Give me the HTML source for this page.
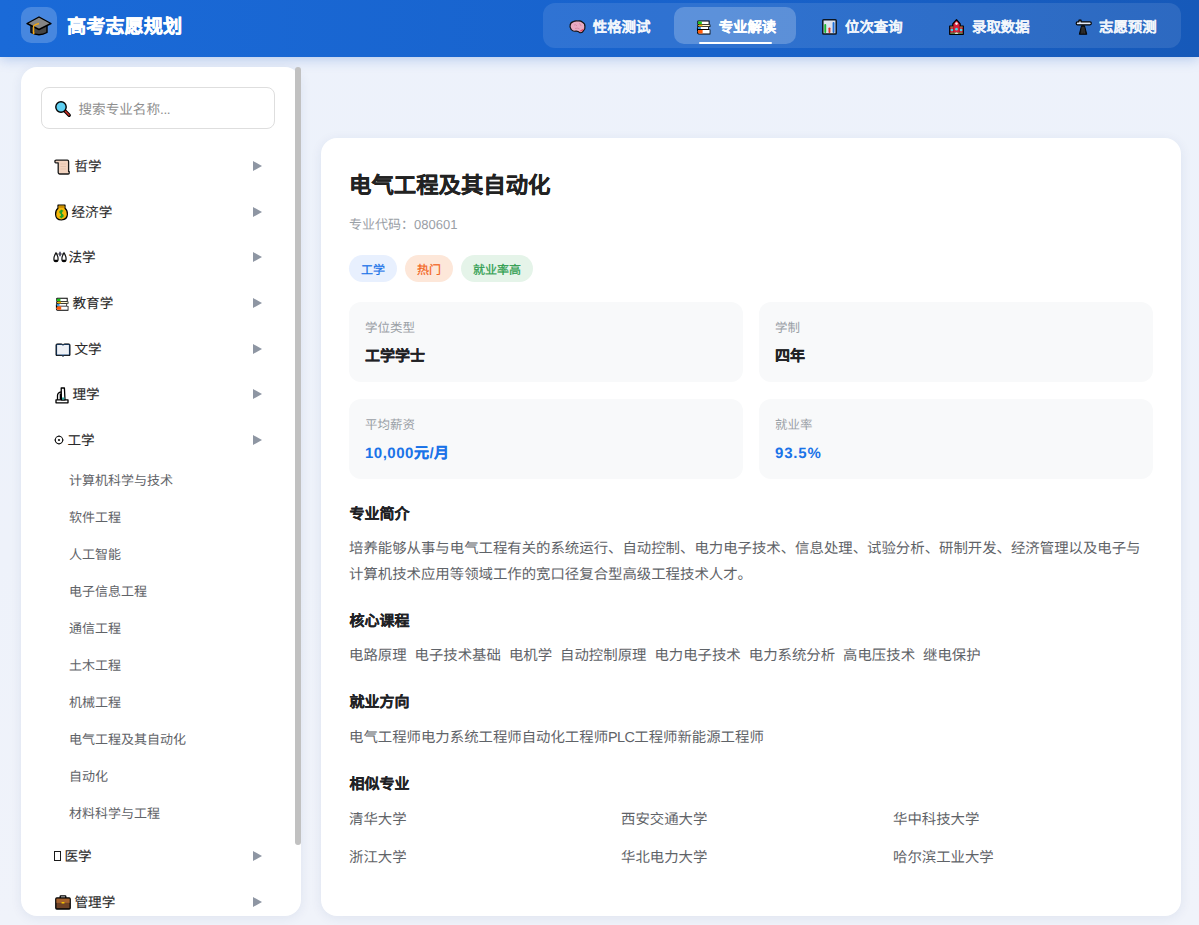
<!DOCTYPE html>
<html lang="zh-CN">
<head>
<meta charset="utf-8">
<title>高考志愿规划</title>
<style>
*{margin:0;padding:0;box-sizing:border-box}
html,body{width:1199px;height:925px;overflow:hidden}
body{font-family:"Liberation Sans",sans-serif;text-rendering:geometricPrecision;background:linear-gradient(180deg,#edf2fb 0%,#eef2fa 60%,#f0f3fa 100%);position:relative;color:#333}
.ic{position:absolute;overflow:visible}
.abs{position:absolute;white-space:nowrap;line-height:1}
#hdr{position:absolute;left:0;top:0;width:1199px;height:57px;background:linear-gradient(90deg,#1a6ad8 0%,#1862cb 60%,#1659b9 100%);box-shadow:0 2px 12px rgba(26,90,200,.28)}
#logo{position:absolute;left:21px;top:7px;width:36px;height:36px;border-radius:10px;background:rgba(255,255,255,.2)}
#brand{left:67px;top:18px;font-size:19.2px;font-weight:700;color:#fff;-webkit-text-stroke:.35px #fff}
#nav{position:absolute;left:543px;top:3px;width:638px;height:45px;border-radius:12px;background:rgba(255,255,255,.1)}
#act{position:absolute;left:674px;top:7px;width:122px;height:37px;border-radius:10px;background:rgba(255,255,255,.22)}
#uline{position:absolute;left:699px;top:42px;width:73px;height:2px;background:#fff;border-radius:1px}
.nt{font-size:14.4px;font-weight:700;color:rgba(255,255,255,.82);top:21px;-webkit-text-stroke:.2px rgba(255,255,255,.82)}
.nt.on{-webkit-text-stroke:.25px #fff}
.nt.on{color:#fff}
#side{position:absolute;left:21px;top:67px;width:280px;height:849px;border-radius:16px;background:#fff;box-shadow:0 2px 12px rgba(20,50,110,.08)}
#thumb{position:absolute;left:295px;top:67px;width:6px;height:778px;border-radius:3px;background:#c1c1c1}
#search{position:absolute;left:41px;top:87px;width:234px;height:42px;border:1px solid #dedede;border-radius:8px;background:#fff}
#ph{left:78.5px;top:103px;font-size:13.6px;color:#8f8f8f}
.cat{font-size:13.6px;color:#2a2a2a;-webkit-text-stroke:.1px #2a2a2a}
.arr{position:absolute;left:253px;width:0;height:0;border-top:5.2px solid transparent;border-bottom:5.2px solid transparent;border-left:9.4px solid #8e96a3}
.sub{font-size:13px;color:#5f6368}
#main{position:absolute;left:321px;top:138px;width:860px;height:778px;border-radius:16px;background:#fff;box-shadow:0 2px 12px rgba(20,50,110,.08)}
#title{left:349px;top:174.5px;-webkit-text-stroke:.25px #222;font-size:22.4px;font-weight:700;color:#222}
#code{left:349px;top:218px;font-size:13px;color:#9aa0a6}
.tag{position:absolute;top:255px;height:27px;border-radius:14px;font-size:12px;line-height:30px;text-align:center;-webkit-text-stroke:.25px currentColor}
.box{position:absolute;width:394px;height:80px;border-radius:12px;background:#f8f9fa}
.lbl{font-size:12.5px;color:#9aa0a6}
.val{font-size:15px;font-weight:700;color:#202124;-webkit-text-stroke:.2px #202124}
.val.blue{color:#1a73e8;-webkit-text-stroke:.15px #1a73e8}
.lat{-webkit-text-stroke:0}
.sec{font-size:15px;font-weight:700;color:#202124;-webkit-text-stroke:.15px #202124}
.txt{font-size:14.4px;color:#5f6368}
</style>
</head>
<body>
<div id="hdr"></div>
<div id="logo"></div>
<div class="abs" id="brand">高考志愿规划</div>
<div id="nav"></div>
<div id="act"></div>
<div id="uline"></div>
<div class="abs nt" style="left:592.8px">性格测试</div>
<div class="abs nt on" style="left:718.7px">专业解读</div>
<div class="abs nt" style="left:845px">位次查询</div>
<div class="abs nt" style="left:972px">录取数据</div>
<div class="abs nt" style="left:1099px">志愿预测</div>

<div id="side"></div>
<div id="thumb"></div>
<div id="search"></div>
<div class="abs" id="ph">搜索专业名称<span style="letter-spacing:-.4px">...</span></div>

<div class="abs cat" style="left:74.5px;top:160.3px">哲学</div><div class="arr" style="top:161px"></div>
<div class="abs cat" style="left:71.5px;top:206.3px">经济学</div><div class="arr" style="top:207px"></div>
<div class="abs cat" style="left:68.5px;top:251.3px">法学</div><div class="arr" style="top:252px"></div>
<div class="abs cat" style="left:72.5px;top:297.3px">教育学</div><div class="arr" style="top:298px"></div>
<div class="abs cat" style="left:74.5px;top:343.3px">文学</div><div class="arr" style="top:344px"></div>
<div class="abs cat" style="left:72.5px;top:388.3px">理学</div><div class="arr" style="top:389px"></div>
<div class="abs cat" style="left:67.5px;top:434.3px">工学</div><div class="arr" style="top:435px"></div>
<div class="abs sub" style="left:69px;top:474.0px">计算机科学与技术</div>
<div class="abs sub" style="left:69px;top:511.0px">软件工程</div>
<div class="abs sub" style="left:69px;top:548.0px">人工智能</div>
<div class="abs sub" style="left:69px;top:585.0px">电子信息工程</div>
<div class="abs sub" style="left:69px;top:622.0px">通信工程</div>
<div class="abs sub" style="left:69px;top:659.0px">土木工程</div>
<div class="abs sub" style="left:69px;top:696.0px">机械工程</div>
<div class="abs sub" style="left:69px;top:733.0px">电气工程及其自动化</div>
<div class="abs sub" style="left:69px;top:770.0px">自动化</div>
<div class="abs sub" style="left:69px;top:807.0px">材料科学与工程</div>
<div class="abs cat" style="left:64.5px;top:850.3px">医学</div><div class="arr" style="top:851px"></div>
<div class="abs cat" style="left:74.5px;top:896.3px">管理学</div><div class="arr" style="top:897px"></div>

<div id="main"></div>
<div class="abs" id="title">电气工程及其自动化</div>
<div class="abs" id="code">专业代码：080601</div>
<div class="tag" style="left:349px;width:48px;background:#e8f0fe;color:#1a73e8">工学</div>
<div class="tag" style="left:405px;width:48px;background:#fde7d9;color:#f26522">热门</div>
<div class="tag" style="left:461px;width:72px;background:#e5f4e9;color:#2e9d4e">就业率高</div>

<div class="box" style="left:349px;top:302.3px;width:393.5px"></div>
<div class="box" style="left:759px;top:302.3px"></div>
<div class="box" style="left:349px;top:398.6px;width:393.5px"></div>
<div class="box" style="left:759px;top:398.6px"></div>
<div class="abs lbl" style="left:365px;top:322.0px">学位类型</div>
<div class="abs val" style="left:365px;top:349.0px">工学学士</div>
<div class="abs lbl" style="left:775px;top:322.0px">学制</div>
<div class="abs val" style="left:775px;top:349.0px">四年</div>
<div class="abs lbl" style="left:365px;top:419.0px">平均薪资</div>
<div class="abs val blue" style="left:365px;top:446.0px"><span class="lat" style="letter-spacing:.5px">10,000</span>元<span class="lat" style="margin:0 .5px">/</span>月</div>
<div class="abs lbl" style="left:775px;top:419.0px">就业率</div>
<div class="abs val blue" style="left:775px;top:446.0px"><span class="lat" style="letter-spacing:.8px">93.5%</span></div>

<div class="abs sec" style="left:349.5px;top:507.0px">专业简介</div>
<div class="abs txt" style="left:349px;top:542.0px">培养能够从事与电气工程有关的系统运行、自动控制、电力电子技术、信息处理、试验分析、研制开发、经济管理以及电子与</div>
<div class="abs txt" style="left:349px;top:568.0px">计算机技术应用等领域工作的宽口径复合型高级工程技术人才。</div>
<div class="abs sec" style="left:349.5px;top:614.0px">核心课程</div>
<div class="abs txt" style="left:349px;top:649.0px">电路原理&nbsp; 电子技术基础&nbsp; 电机学&nbsp; 自动控制原理&nbsp; 电力电子技术&nbsp; 电力系统分析&nbsp; 高电压技术&nbsp; 继电保护</div>
<div class="abs sec" style="left:349.5px;top:695.0px">就业方向</div>
<div class="abs txt" style="left:349px;top:731.0px">电气工程师电力系统工程师自动化工程师<span style="letter-spacing:-.6px">PLC</span>工程师新能源工程师</div>
<div class="abs sec" style="left:349.5px;top:777.0px">相似专业</div>
<div class="abs txt" style="left:349px;top:813.0px">清华大学</div>
<div class="abs txt" style="left:621px;top:813.0px">西安交通大学</div>
<div class="abs txt" style="left:893px;top:813.0px">华中科技大学</div>
<div class="abs txt" style="left:349px;top:851.0px">浙江大学</div>
<div class="abs txt" style="left:621px;top:851.0px">华北电力大学</div>
<div class="abs txt" style="left:893px;top:851.0px">哈尔滨工业大学</div>

<!-- icons -->
<svg class="ic" style="left:26px;top:15.5px" width="26" height="21" viewBox="0 0 26 21">
 <path d="M5 9.5 V16.5 Q13 21 21 16.5 V9.5 Z" fill="#454545" stroke="#000" stroke-width="1.4" stroke-linejoin="round"/>
 <path d="M1 7.5 L13 1 L25 7.5 L13 13.5 Z" fill="#858585" stroke="#000" stroke-width="1.4" stroke-linejoin="round"/>
 <path d="M13 7.5 Q9 8.5 7.6 10 V17" fill="none" stroke="#f3a712" stroke-width="1.3"/>
 <circle cx="7.6" cy="17.3" r="1" fill="#f3a712"/>
</svg>
<svg class="ic" style="left:54px;top:100px" width="17" height="17" viewBox="0 0 17 17">
 <path d="M10.5 10.5 L15.2 15.2" stroke="#000" stroke-width="3.4" stroke-linecap="round"/>
 <path d="M10.8 10.8 L15 15" stroke="#d22f27" stroke-width="1.5" stroke-linecap="round"/>
 <circle cx="7" cy="7" r="5.2" fill="#5fd0f2" stroke="#000" stroke-width="1.4"/>
</svg>
<svg class="ic" style="left:568.5px;top:19.5px" width="17" height="14" viewBox="0 0 17 14">
 <path d="M2.2 9.5 Q0.3 7.5 1.2 5 Q1.6 2.2 4.5 1.6 Q6.5 0.4 9 1 Q11.5 0.6 13.6 2.2 Q16.2 3.6 15.9 6.6 Q16.4 9.5 14.3 11 Q13.2 13.3 10.8 12.6 Q9 11 6.8 11.2 Q3.8 11.6 2.2 9.5 Z" fill="#e8aac2" stroke="#111" stroke-width="1.2" stroke-linejoin="round"/>
 <path d="M10.2 11.2 Q12.5 12.2 14 10.5 L14.8 8.5 Q12.5 9.8 10.2 11.2Z" fill="#e0465e"/>
 <path d="M5 5 Q7 4 8 6 M10 3.5 Q12 4 12 6 M6 8.5 Q8.5 7.5 10.5 9" stroke="#cf7e9a" stroke-width="0.7" fill="none"/>
</svg>
<svg class="ic" style="left:696px;top:20px" width="15" height="15" viewBox="0 0 15 15">
 <path d="M1.2 2 Q1.2 0.6 2.6 0.6 H13.6 V4.6 H14.4 V7 H13 V9.4 H14.4 V14.4 H2.6 Q1 14.4 1 12.6 V10.4 Q0.6 8 1.4 7 Q1 5.6 1.6 4.6 Q1.2 3.6 1.2 2 Z" fill="#000"/>
 <path d="M2.8 1.5 H12.6 V3.9 H2.8 Q1.9 3.9 1.9 2.7 Q1.9 1.5 2.8 1.5Z" fill="#fff"/><path d="M2.8 1.5 H5.8 V3.9 H2.8 Q1.9 3.9 1.9 2.7 Q1.9 1.5 2.8 1.5Z" fill="#19c419"/>
 <path d="M3 4.7 H13.6 V6.3 H3 Q2.3 6.3 2.3 5.5 Q2.3 4.7 3 4.7Z" fill="#fff7d0"/><path d="M3 4.7 H6.4 V6.3 H3 Q2.3 6.3 2.3 5.5 Q2.3 4.7 3 4.7Z" fill="#f5b400"/>
 <path d="M2.6 7.1 H12.2 V9.1 H2.6 Q1.8 9.1 1.8 8.1 Q1.8 7.1 2.6 7.1Z" fill="#fff"/><path d="M2.6 7.1 H4.8 V9.1 H2.6 Q1.8 9.1 1.8 8.1 Q1.8 7.1 2.6 7.1Z" fill="#2b8de8"/>
 <path d="M3 9.9 H13.6 V13.5 H3 Q1.8 13.5 1.8 11.7 Q1.8 9.9 3 9.9Z" fill="#fff"/><path d="M3 9.9 H6.6 V13.5 H3 Q1.8 13.5 1.8 11.7 Q1.8 9.9 3 9.9Z" fill="#ff5a0a"/>
</svg>
<svg class="ic" style="left:822px;top:19px" width="15" height="16" viewBox="0 0 15 16">
 <rect x="0.8" y="0.8" width="13.4" height="14.2" rx="0.8" fill="#dde3ee" stroke="#0b1522" stroke-width="1.5"/>
 <rect x="2.3" y="5" width="1.9" height="9" rx="0.9" fill="#16b82e"/>
 <rect x="6.5" y="8.4" width="1.9" height="5.6" rx="0.9" fill="#e0352b"/>
 <rect x="10.6" y="3" width="1.9" height="11" rx="0.9" fill="#1e6fd9"/>
</svg>
<svg class="ic" style="left:949px;top:19px" width="15" height="16" viewBox="0 0 15 16">
 <path d="M7.5 0.6 L11.2 4.8 V7 H14.3 V15.3 H0.7 V7 H3.8 V4.8 Z" fill="#d8203a" stroke="#000" stroke-width="1.2" stroke-linejoin="round"/>
 <circle cx="7.5" cy="4.6" r="1.3" fill="#f2f2f2"/>
 <path d="M4.6 7.2 V14.6 M10.4 7.2 V14.6" stroke="#8a0f1f" stroke-width="0.6"/>
 <rect x="1.3" y="7.6" width="2.9" height="0.9" fill="#7a9a40"/><rect x="10.8" y="7.6" width="2.9" height="0.9" fill="#7a9a40"/>
 <circle cx="2.9" cy="11" r="1.35" fill="#3fd6ea"/><circle cx="7.5" cy="10.2" r="1.35" fill="#3fd6ea"/><circle cx="12.1" cy="11" r="1.35" fill="#3fd6ea"/>
 <rect x="1.3" y="13.6" width="12.4" height="1.1" fill="#3aa655"/>
 <path d="M5.6 14.8 Q7.5 12.4 9.4 14.8Z" fill="#fff"/>
</svg>
<svg class="ic" style="left:1075px;top:19px" width="17" height="16" viewBox="0 0 17 16">
 <path d="M6.5 6.8 L9.5 6.8 L11.8 15.3 L4.3 15.3 Z" fill="#1a1a1a" stroke="#000" stroke-width="0.9"/>
 <path d="M7.2 8 L7 14.5 M8.8 8 L9.2 14.5" stroke="#555" stroke-width="0.6"/>
 <path d="M1.2 4.2 Q1.2 2.8 2.6 2.8 H4 V1.2 H6 V2.8 H15 Q16.3 2.8 16.3 4.3 Q16.3 5.8 15 5.8 H2.6 Q1.2 5.8 1.2 4.2 Z" fill="#e4ecfa" stroke="#000" stroke-width="1.2" stroke-linejoin="round"/>
</svg>
<svg class="ic" style="left:54px;top:157.5px" width="16" height="17" viewBox="0 0 16 17">
 <path d="M4.2 2.2 H13.4 Q14.6 2.2 14.6 3.4 V13.4 H15.2 V15.2 Q15.2 16 14.2 16 H5.6 Q4.2 16 4.2 14.6 V4.8 H1.8 Q0.9 4.8 0.9 3.5 Q0.9 2.2 2.2 2.2 Z" fill="#f2d3bf" stroke="#1a1a1a" stroke-width="1.3" stroke-linejoin="round"/>
 <path d="M6.5 6 H12 M6.5 8.5 H12 M6.5 11 H12" stroke="#d8b9a4" stroke-width="0.6"/>
</svg>
<svg class="ic" style="left:54.5px;top:203.5px" width="13" height="17" viewBox="0 0 13 17">
 <path d="M3 1 H10 V4.2 Q12.6 6.2 12.4 10.4 Q12.2 15.6 6.5 16 Q0.8 15.6 0.6 10.4 Q0.4 6.2 3 4.2 Z" fill="#f5b70a" stroke="#000" stroke-width="1.2" stroke-linejoin="round"/>
 <rect x="3.6" y="2" width="5.8" height="1.8" fill="#c98a00"/>
 <path d="M8.2 7.2 Q6.6 6.2 5.2 7.2 Q4.3 8.6 6.4 9.8 Q8.6 11 7.8 12.6 Q6.4 13.8 4.8 12.6 M6.5 5.8 V14.2" fill="none" stroke="#1ca32a" stroke-width="1.3"/>
</svg>
<svg class="ic" style="left:53px;top:251px" width="14" height="12" viewBox="0 0 14 12">
 <path d="M2.5 3 H11.5" stroke="#333" stroke-width="0.8"/>
 <path d="M7 0.8 V5.2" stroke="#1a1a3a" stroke-width="1.3"/>
 <path d="M3 1.8 Q0.9 5 0.9 8.2 Q0.9 10.6 3 10.6 Q5.1 10.6 5.1 8.2 Q5.1 5 3 1.8 Z" fill="#fff" stroke="#111" stroke-width="1.2"/>
 <path d="M11 1.8 Q8.9 5 8.9 8.2 Q8.9 10.6 11 10.6 Q13.1 10.6 13.1 8.2 Q13.1 5 11 1.8 Z" fill="#fff" stroke="#111" stroke-width="1.2"/>
 <path d="M1.3 9.6 H4.7 M9.3 9.6 H12.7" stroke="#000" stroke-width="1.6"/>
</svg>
<svg class="ic" style="left:55px;top:296.5px" width="14" height="14.5" viewBox="0 0 15 15">
 <path d="M1.2 2 Q1.2 0.6 2.6 0.6 H13.6 V4.6 H14.4 V7 H13 V9.4 H14.4 V14.4 H2.6 Q1 14.4 1 12.6 V10.4 Q0.6 8 1.4 7 Q1 5.6 1.6 4.6 Q1.2 3.6 1.2 2 Z" fill="#000"/>
 <path d="M2.8 1.5 H12.6 V3.9 H2.8 Q1.9 3.9 1.9 2.7 Q1.9 1.5 2.8 1.5Z" fill="#fff"/><path d="M2.8 1.5 H5.8 V3.9 H2.8 Q1.9 3.9 1.9 2.7 Q1.9 1.5 2.8 1.5Z" fill="#19c419"/>
 <path d="M3 4.7 H13.6 V6.3 H3 Q2.3 6.3 2.3 5.5 Q2.3 4.7 3 4.7Z" fill="#fff7d0"/><path d="M3 4.7 H6.4 V6.3 H3 Q2.3 6.3 2.3 5.5 Q2.3 4.7 3 4.7Z" fill="#f5b400"/>
 <path d="M2.6 7.1 H12.2 V9.1 H2.6 Q1.8 9.1 1.8 8.1 Q1.8 7.1 2.6 7.1Z" fill="#fff"/><path d="M2.6 7.1 H4.8 V9.1 H2.6 Q1.8 9.1 1.8 8.1 Q1.8 7.1 2.6 7.1Z" fill="#2b8de8"/>
 <path d="M3 9.9 H13.6 V13.5 H3 Q1.8 13.5 1.8 11.7 Q1.8 9.9 3 9.9Z" fill="#fff"/><path d="M3 9.9 H6.6 V13.5 H3 Q1.8 13.5 1.8 11.7 Q1.8 9.9 3 9.9Z" fill="#ff5a0a"/>
</svg>
<svg class="ic" style="left:54.5px;top:342.5px" width="16" height="14" viewBox="0 0 16 14">
 <path d="M1 2 Q1 0.9 2.2 0.9 H6.4 Q7.5 0.9 8 1.8 Q8.5 0.9 9.6 0.9 H13.8 Q15 0.9 15 2 V12.4 H9.2 Q8.6 13.3 8 13.3 Q7.4 13.3 6.8 12.4 H1 Z" fill="#1f4f86" stroke="#000" stroke-width="0.9" stroke-linejoin="round"/>
 <path d="M2.1 2.1 H6.6 Q7.6 2.1 8 3 Q8.4 2.1 9.4 2.1 H13.9 V11.4 H2.1 Z" fill="#eef1f6"/>
</svg>
<svg class="ic" style="left:54.5px;top:386.5px" width="14" height="17" viewBox="0 0 14 17">
 <path d="M1 12.8 H13 V15.8 H1 Z" fill="#fff" stroke="#000" stroke-width="1.3" stroke-linejoin="round"/>
 <path d="M2.5 12.8 V8.5 Q2.5 5.5 6.3 4.8" fill="none" stroke="#000" stroke-width="1.3"/>
 <path d="M6.2 1 H9.4 L10 12.8 H6.4 Z" fill="#fff" stroke="#000" stroke-width="1.3" stroke-linejoin="round"/>
 <path d="M7 10.5 H9.4 V12.6 H7Z" fill="#2aa7a0"/>
 <path d="M5.4 6.5 V12.6" stroke="#000" stroke-width="1.4"/>
</svg>
<svg class="ic" style="left:54px;top:435px" width="10" height="10" viewBox="0 0 10 10">
 <circle cx="5" cy="5" r="3.7" fill="none" stroke="#111" stroke-width="1.1"/>
 <circle cx="5" cy="5" r="1.1" fill="#111"/>
 <path d="M5 0.4 V1.6 M5 8.4 V9.6 M0.4 5 H1.6 M8.4 5 H9.6" stroke="#111" stroke-width="0.9"/>
</svg>
<svg class="ic" style="left:54px;top:851px" width="7" height="10" viewBox="0 0 7 10">
 <rect x="0.5" y="0.5" width="6" height="9" fill="none" stroke="#1a1a1a" stroke-width="1"/>
</svg>
<svg class="ic" style="left:54.5px;top:895px" width="16" height="15" viewBox="0 0 16 15">
 <path d="M5.2 3.2 V1.4 Q5.2 0.8 5.8 0.8 H10.2 Q10.8 0.8 10.8 1.4 V3.2" fill="none" stroke="#000" stroke-width="1.3"/>
 <rect x="0.8" y="3" width="14.4" height="11" rx="1" fill="#6f4327" stroke="#000" stroke-width="1.3"/>
 <rect x="1.45" y="3.65" width="13.1" height="4.2" fill="#a4622f"/>
 <rect x="6.5" y="7.1" width="3" height="1.3" rx="0.5" fill="#f5c400"/>
</svg>
</body>
</html>
